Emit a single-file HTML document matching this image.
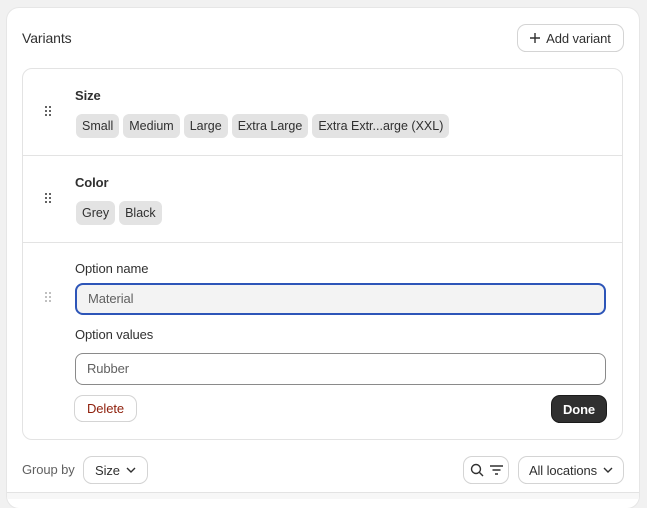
<!DOCTYPE html><html><head><style>
*{box-sizing:border-box;margin:0;padding:0}
body{width:647px;height:499px;background:#f1f1f1;font-family:"Liberation Sans",sans-serif;font-size:13px;color:#303030;position:relative;overflow:hidden;letter-spacing:-0.1px}
.card{position:absolute;left:7px;top:8px;width:632px;height:500px;background:#fff;border-radius:12px;box-shadow:0 0 0 1px #e6e6e6}
.abs{position:absolute}
.btn{position:absolute;background:#fff;border-radius:8px;box-shadow:0 0 0 1px #d4d4d4,0 1px 0 #bbb;font-size:13px;color:#303030;display:flex;align-items:center;justify-content:center;gap:6px}
.box{position:absolute;left:22px;top:68px;width:601px;height:372px;border:1px solid #e3e3e3;border-radius:10px}
.tag{display:inline-block;background:#e3e3e3;border-radius:6px;padding:0 6px;height:24px;line-height:24px;font-size:12.5px;margin-right:4px;letter-spacing:0}
.drag{position:absolute;width:7px;height:11px}
.drag i{position:absolute;width:2px;height:2px;background:#303030;border-radius:1px}
.inp{position:absolute;left:75px;width:531px;height:32px;border-radius:8px;border:1px solid #8a8a8a;font-size:13px;padding-left:11px;line-height:30px;color:#616161}
</style></head><body>
<div class="card"></div>
<div class="abs" style="left:22px;top:30px;font-size:14px;color:#303030">Variants</div>
<div class="btn" style="left:518px;top:25px;width:105px;height:26px">
<svg width="10" height="10" viewBox="0 0 10 10"><path d="M5 0v10M0 5h10" stroke="#303030" stroke-width="1.4"/></svg>Add variant</div>
<div class="box">
 <div class="abs" style="left:0;top:86px;width:599px;height:1px;background:#e3e3e3"></div>
 <div class="abs" style="left:0;top:173px;width:599px;height:1px;background:#e3e3e3"></div>
</div>
<div class="drag" style="left:45px;top:106px"><i style="left:0;top:0"></i><i style="left:4px;top:0"></i><i style="left:0;top:4px"></i><i style="left:4px;top:4px"></i><i style="left:0;top:8px"></i><i style="left:4px;top:8px"></i></div>
<div class="abs" style="left:75px;top:88px;font-weight:bold;font-size:13px">Size</div>
<div class="abs" style="left:76px;top:114px"><span class="tag">Small</span><span class="tag">Medium</span><span class="tag">Large</span><span class="tag">Extra Large</span><span class="tag">Extra Extr...arge (XXL)</span></div>
<div class="drag" style="left:45px;top:193px"><i style="left:0;top:0"></i><i style="left:4px;top:0"></i><i style="left:0;top:4px"></i><i style="left:4px;top:4px"></i><i style="left:0;top:8px"></i><i style="left:4px;top:8px"></i></div>
<div class="abs" style="left:75px;top:175px;font-weight:bold;font-size:13px">Color</div>
<div class="abs" style="left:76px;top:201px"><span class="tag">Grey</span><span class="tag">Black</span></div>
<div class="drag" style="left:45px;top:292px;opacity:.4"><i style="left:0;top:0"></i><i style="left:4px;top:0"></i><i style="left:0;top:4px"></i><i style="left:4px;top:4px"></i><i style="left:0;top:8px"></i><i style="left:4px;top:8px"></i></div>
<div class="abs" style="left:75px;top:261px">Option name</div>
<div class="inp" style="top:283px;background:#f3f3f3;border:2px solid #2d55b8;line-height:28px">Material</div>
<div class="abs" style="left:75px;top:327px">Option values</div>
<div class="inp" style="top:353px;background:#fff">Rubber</div>
<div class="btn" style="left:75px;top:396px;width:61px;height:25px;color:#8e1f0b">Delete</div>
<div class="btn" style="left:552px;top:396px;width:54px;height:26px;background:#303030;color:#fff;font-weight:bold;box-shadow:0 0 0 1px #1a1a1a,0 1px 0 #000">Done</div>
<div class="abs" style="left:22px;top:462px;color:#616161">Group by</div>
<div class="btn" style="left:84px;top:457px;width:63px;height:26px">Size <svg width="10" height="6" viewBox="0 0 10 6"><path d="M1 1l4 4 4-4" fill="none" stroke="#303030" stroke-width="1.4"/></svg></div>
<div class="btn" style="left:464px;top:457px;width:44px;height:26px">
<svg width="14" height="14" viewBox="0 0 14 14"><circle cx="6" cy="6" r="4.5" fill="none" stroke="#303030" stroke-width="1.4"/><path d="M9.5 9.5l3.5 3.5" stroke="#303030" stroke-width="1.4"/></svg>
<svg width="13" height="10" viewBox="0 0 13 10"><path d="M0 1h13M2.5 5h8M5 9h3" stroke="#303030" stroke-width="1.4"/></svg></div>
<div class="btn" style="left:519px;top:457px;width:104px;height:26px">All locations <svg width="10" height="6" viewBox="0 0 10 6"><path d="M1 1l4 4 4-4" fill="none" stroke="#303030" stroke-width="1.4"/></svg></div>
<div class="abs" style="left:7px;top:492px;width:632px;height:1px;background:#e3e3e3"></div>
<div class="abs" style="left:7px;top:493px;width:632px;height:6px;background:#f7f7f7"></div>
</body></html>
